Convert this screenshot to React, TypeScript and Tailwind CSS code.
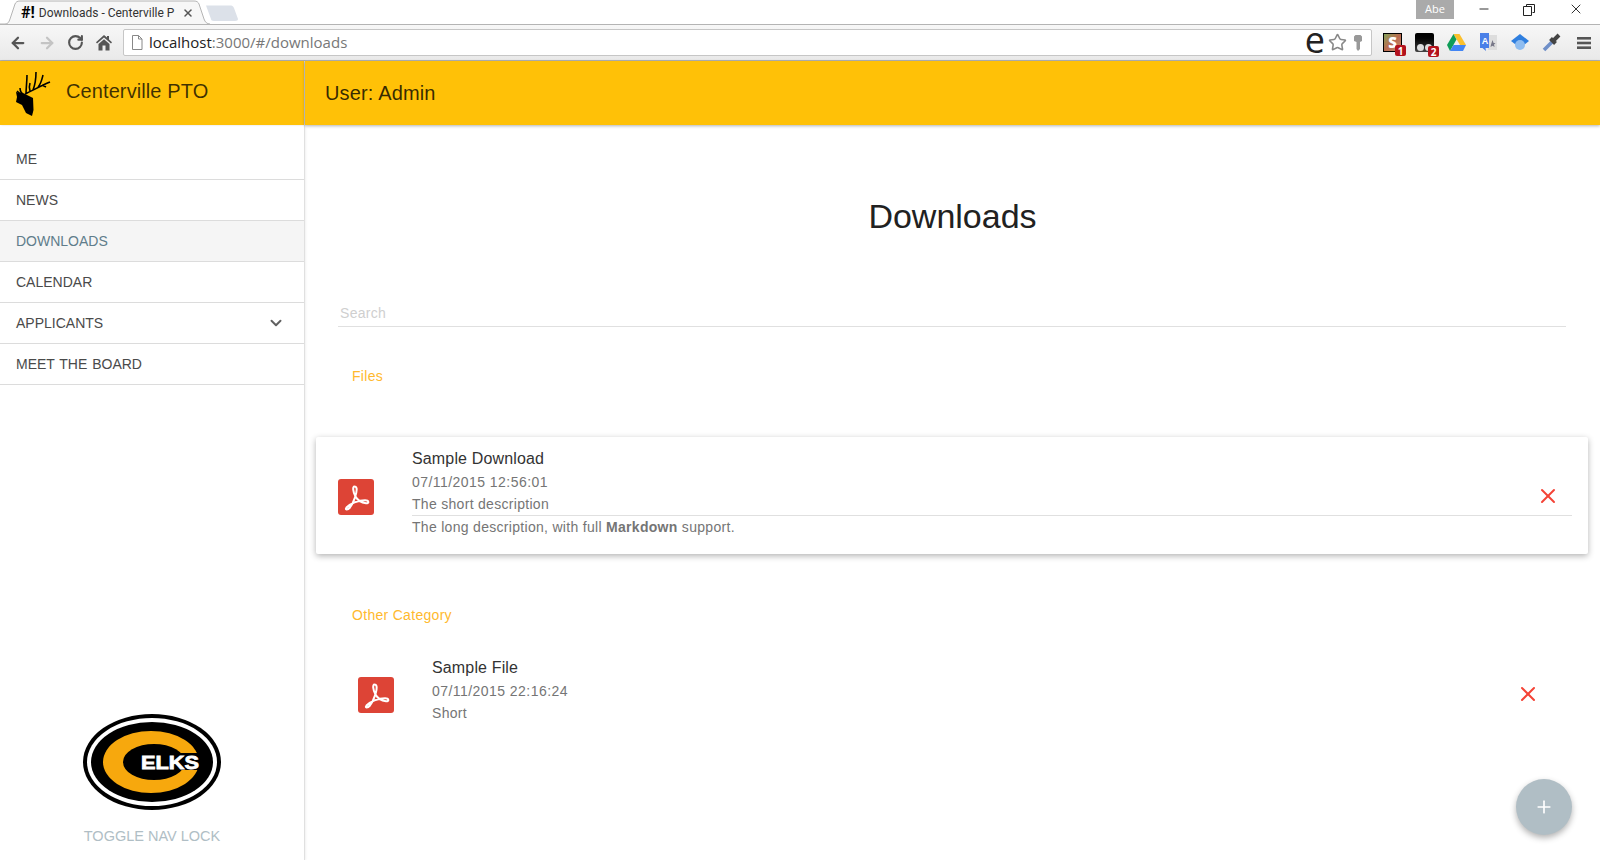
import { ArrowLeft, ArrowRight, ChevronDown, Minus, Plus, RotateCw, Star, X } from 'lucide-react'

const navItems = ['Me', 'News', 'Downloads', 'Calendar', 'Applicants', 'Meet the Board']

function PdfIcon() {
  return (
    <svg width="36" height="36" viewBox="0 0 36 36" className="mt-[3px] shrink-0">
      <rect width="36" height="36" rx="3" fill="#dd4436" />
      <path
        d="M16.5 7.5C14.5 7.5 14.8 12.5 17.5 17.5C20 22 23.5 23.8 28 24.3C31.5 24.5 31 21.3 27 21.3C20.5 21.3 12 24.5 8.5 28.5C6.5 31 9.5 31.5 12 28.5C15.5 24 19.5 13 18.5 9C18.2 8 17.5 7.5 16.5 7.5Z"
        fill="none"
        stroke="#fff"
        strokeWidth="2"
      />
    </svg>
  )
}

function ElkHead() {
  return (
    <svg width="40" height="50" viewBox="15 68 40 50" className="shrink-0">
      <path d="M16 92L25 94L33 98L33.5 110L32 116L26 113L22 105L16 102L17 97Z" fill="#000" />
      <path
        d="M25 94C32 91 40 86 50 82M26 94C26 88 27 82 27 75M33 90C35 85 36 79 36 72M38 87C41 84 42 79 43 75M42 85L46 87M20 88C20 91 22 94 25 95M17 91C19 93 22 95 25 95M30 91C29 88 29 86 30 83"
        fill="none"
        stroke="#000"
        strokeWidth="1.6"
      />
    </svg>
  )
}

function ElksLogo() {
  return (
    <svg width="140" height="100" viewBox="0 0 140 100">
      <ellipse cx="70" cy="50" rx="69" ry="48" fill="#000" />
      <ellipse cx="70" cy="50" rx="65" ry="44" fill="#fff" />
      <ellipse cx="70" cy="50" rx="61" ry="40" fill="#000" />
      <ellipse cx="69" cy="50" rx="48" ry="31" fill="#f7a80d" />
      <ellipse cx="72" cy="50" rx="31" ry="18" fill="#000" />
      <rect x="88" y="41" width="36" height="17" fill="#000" />
      <text
        x="59"
        y="56.5"
        fill="#fff"
        fontSize="18"
        fontWeight="900"
        fontFamily="'Liberation Sans', sans-serif"
        stroke="#fff"
        strokeWidth="0.8"
        textLength="58"
        lengthAdjust="spacingAndGlyphs"
      >
        ELKS
      </text>
    </svg>
  )
}

function Badge({ n }: { n: string }) {
  return (
    <span className="absolute right-[-5px] bottom-[-5px] flex h-[11px] w-[11px] items-center justify-center rounded-[2px] bg-[#b3121d] text-[10px] leading-none font-bold text-white">
      {n}
    </span>
  )
}

function BrowserChrome() {
  return (
    <div className="shrink-0 font-['Open_Sans',sans-serif]">
      {/* tab strip */}
      <div className="relative flex h-[24px] items-start bg-white">
        <svg width="250" height="25" viewBox="0 0 250 25" className="absolute top-0 left-0">
          <path d="M0 24H5C8 24 9 22 10 19L15 4C16 2 17 1 20 1H194C197 1 198 2 199 4L204 19C205 22 207 24 210 24" fill="#f7f7f7" stroke="#b4b4b4" />
          <path d="M206 5.5H230C232 5.5 233 6 234 8L238 19C238 20 237 21 235 21H214C212 21 211 20 211 19Z" fill="#dce1e9" />
        </svg>
        <div className="relative flex h-[24px] w-[196px] items-center pt-[1px] pl-[21px] font-['Roboto',sans-serif] text-[12px] text-[#333]">
          <span className="mr-[4px] text-[16px] leading-none font-bold text-black">#!</span>
          <span className="w-[135px] whitespace-nowrap">Downloads - Centerville P</span>
          <X size={12} strokeWidth={3} className="ml-[8px] shrink-0 text-[#555]" />
        </div>
        <div className="ml-auto flex h-[24px] items-start text-[#222]">
          <div className="mr-[23px] flex h-[19px] w-[38px] items-center justify-center bg-[#aaaaaa] text-[11px] text-white">Abe</div>
          <Minus size={14} strokeWidth={1.6} className="mt-[2px] mr-[32px]" />
          <svg width="12" height="12" viewBox="0 0 12 12" className="mt-[4px] mr-[33px]" fill="none" stroke="#222">
            <path d="M3.5 2.5V.5H11.5V8.5H9.5M.5 2.5H8.5V11.5H.5Z" />
          </svg>
          <X size={16} strokeWidth={1.4} className="mt-[1px] mr-[16px]" />
        </div>
      </div>
      {/* toolbar */}
      <div className="flex h-[37px] items-center border-t border-b border-[#b4b4b4] bg-gradient-to-b from-[#f7f7f7] to-[#e9e9e9] pr-[9px] pl-[9px]">
        <ArrowLeft size={18} strokeWidth={3} className="text-[#555]" />
        <ArrowRight size={18} strokeWidth={3} className="ml-[11px] text-[#c4c4c4]" />
        <RotateCw size={17} strokeWidth={3} className="ml-[11px] text-[#555]" />
        <svg width="16" height="17" viewBox="0 0 16 17" className="ml-[12px]">
          <path d="M8 1L11 3.6V2H13V5.4L16 8.2L15 9.4L8 3.4L1 9.4L0 8.2ZM2.5 10L8 5.2L13.5 10V16.5H9.5V11.5H6.5V16.5H2.5Z" fill="#555" />
        </svg>
        <div className="ml-[11px] flex h-[27px] flex-1 items-center rounded-[2px] border border-[#c6c6c6] bg-white pr-[9px] pl-[7px]">
          <svg width="12" height="15" viewBox="0 0 12 15" fill="#fff" stroke="#888">
            <path d="M1.5.5H7.5L11 4V14.5H1.5ZM7.5.5V4H11" />
          </svg>
          <span className="ml-[6px] text-[15px] leading-none text-[#222]">
            localhost<span className="text-[#777]">:3000/#/downloads</span>
          </span>
          <span className="mt-[-5px] ml-auto text-[36px] leading-none text-[#222]">e</span>
          <Star size={19} strokeWidth={2} className="ml-[3px] text-[#888]" />
          <svg width="8" height="16" viewBox="0 0 8 16" className="ml-[7px]" fill="#999">
            <path d="M0 1.5L1.5 0H6.5L8 1.5V6L6 7V14L4 16L2.5 14V7L0 6Z" />
          </svg>
        </div>
        <div className="ml-[11px] flex items-center gap-[13px]">
          <div className="relative flex h-[19px] w-[19px] items-center justify-center border border-black bg-gradient-to-br from-[#7da05a] via-[#b86a50] to-[#c99070] text-[15px] leading-none font-black text-white">
            S
            <Badge n="1" />
          </div>
          <div className="relative h-[19px] w-[19px] rounded-[2px] bg-gradient-to-b from-black to-[#444]">
            <span className="absolute bottom-[1px] left-[2px] h-[7px] w-[7px] rounded-full bg-[#ddd]" />
            <span className="absolute right-[2px] bottom-[1px] h-[7px] w-[7px] rounded-full bg-[#ddd]" />
            <Badge n="2" />
          </div>
          <svg width="19" height="17" viewBox="0 0 19 17">
            <path d="M6.5 0H12.5L19 11H13Z" fill="#fbc02d" />
            <path d="M6.5 0L0 11L3 17L9.5 5.5Z" fill="#0f9d58" />
            <path d="M3 17H16L19 11H6.5Z" fill="#4285f4" />
          </svg>
          <svg width="19" height="19" viewBox="0 0 19 19">
            <path d="M9 2H18V17H9Z" fill="#ddd" />
            <path d="M13.5 7L14.6 10H16.5L15 11.6L15.6 14L13.5 12.8L11.5 14L12 11.6Z" fill="#778" />
            <path d="M1 0H10V15H6.5L7 18L3.5 15H1Z" fill="#4a80e8" />
            <text x="2.8" y="11" fill="#fff" fontSize="9" fontWeight="700" fontFamily="'Liberation Sans', sans-serif">A</text>
          </svg>
          <svg width="18" height="17" viewBox="0 0 18 17">
            <path d="M9 0L18 7L9 14L0 7Z" fill="#2f7fdf" />
            <circle cx="9" cy="11" r="5" fill="#8fbdf0" />
          </svg>
          <svg width="19" height="19" viewBox="0 0 19 19">
            <path d="M11 8L2 17" stroke="#6f8fc8" strokeWidth="3.5" />
            <path d="M8.5 5.5L13.5 10.5M12 7L17 2" stroke="#444" strokeWidth="4" />
          </svg>
          <svg width="14" height="12" viewBox="0 0 14 12" className="ml-[3px]" fill="#555">
            <rect width="14" height="2.6" />
            <rect y="4.7" width="14" height="2.6" />
            <rect y="9.4" width="14" height="2.6" />
          </svg>
        </div>
      </div>
    </div>
  )
}

function Sidebar() {
  return (
    <aside className="flex w-[305px] shrink-0 flex-col border-r border-[#e0e0e0] bg-white shadow-[1px_0_2px_rgba(0,0,0,0.06)]">
      <div className="flex h-[64px] shrink-0 items-center bg-[#ffc107] pl-[15px] text-[20px] tracking-[0.1px] text-[rgba(0,0,0,0.75)] shadow-[1px_0_2px_rgba(0,0,0,0.15)]">
        <ElkHead />
        <span className="ml-[11px] pb-[5px]">Centerville PTO</span>
      </div>
      <nav className="pt-[14px] text-[14px] [word-spacing:1px] uppercase">
        {navItems.map((item) => (
          <div
            key={item}
            className={
              'flex h-[41px] items-center justify-between border-b border-[#dcdcdc] pr-[19px] pl-[16px] ' +
              (item === 'Downloads' ? 'bg-[#f5f5f5] text-[#607d8b]' : 'text-[#4a4a4a]')
            }
          >
            {item}
            {item === 'Applicants' && <ChevronDown size={18} strokeWidth={2.6} className="text-[#616161]" />}
          </div>
        ))}
      </nav>
      <div className="mt-auto flex flex-col items-center pb-[12px]">
        <ElksLogo />
        <span className="mt-[14px] text-[14.5px] text-[#b0bec5] uppercase">Toggle nav lock</span>
      </div>
    </aside>
  )
}

function FileRow({
  title,
  date,
  short,
  long,
  raised,
}: {
  title: string
  date: string
  short: string
  long?: boolean
  raised?: boolean
}) {
  return (
    <div
      className={
        'flex items-center rounded-[2px] ' +
        (raised ? 'mr-[12px] ml-[11px] h-[117px] bg-white pr-[16px] pl-[22px] shadow-[0_2px_6px_rgba(0,0,0,0.3)]' : 'mr-[32px] ml-[31px] h-[96px] pr-[16px] pl-[22px]')
      }
    >
      <PdfIcon />
      <div className="ml-[38px] flex-1 pb-[5px] text-[#757575]">
        <div className="text-[16px] leading-[22px] tracking-[0.15px] text-[#333]">{title}</div>
        <div className="mt-[1.5px] text-[14px] leading-[21px] tracking-[0.45px]">{date}</div>
        <div className="text-[14px] leading-[22px] tracking-[0.3px]">{short}</div>
        {long && (
          <div className="border-t border-[#e0e0e0] text-[14px] leading-[22px] tracking-[0.3px]">
            The long description, with full <strong className="font-bold">Markdown</strong> support.
          </div>
        )}
      </div>
      <X size={24} strokeWidth={2} className="mt-[1px] mr-[12px] ml-[-36px] text-[#f44336]" />
    </div>
  )
}

export default function App() {
  return (
    <div className="flex h-[860px] w-[1600px] flex-col overflow-hidden bg-white font-['Liberation_Sans',Arial,sans-serif]">
      <BrowserChrome />
      <div className="relative flex min-h-0 flex-1">
        <Sidebar />
        <main className="min-w-0 flex-1">
          <header className="flex h-[64px] items-center bg-[#ffc107] pl-[20px] text-[20px] tracking-[0.15px] text-[rgba(0,0,0,0.8)] shadow-[0_1px_3px_rgba(0,0,0,0.3)]">
            User: Admin
          </header>
          <h1 className="mt-[69px] text-center text-[34px] leading-[44px] text-[#212121]">Downloads</h1>
          <div className="mt-[65px] mr-[34px] ml-[33px] border-b border-[#e0e0e0] pb-[3px] pl-[2px] text-[14px] leading-[20px] tracking-[0.3px] text-[#cfcfcf]">Search</div>
          <h2 className="mt-[39px] ml-[47px] text-[14px] leading-[20px] tracking-[0.3px] text-[#ffb92e]">Files</h2>
          <div className="mt-[51px]">
            <FileRow title="Sample Download" date="07/11/2015 12:56:01" short="The short description" long raised />
          </div>
          <h2 className="mt-[51px] ml-[47px] text-[14px] leading-[20px] tracking-[0.3px] text-[#ffb92e]">Other Category</h2>
          <div className="mt-[20px]">
            <FileRow title="Sample File" date="07/11/2015 22:16:24" short="Short" />
          </div>
        </main>
        <button className="absolute right-[28px] bottom-[25px] flex h-[56px] w-[56px] items-center justify-center rounded-full bg-[#b0bec5] text-white shadow-[0_3px_6px_rgba(0,0,0,0.3)]">
          <Plus size={20} strokeWidth={2} />
        </button>
      </div>
    </div>
  )
}
